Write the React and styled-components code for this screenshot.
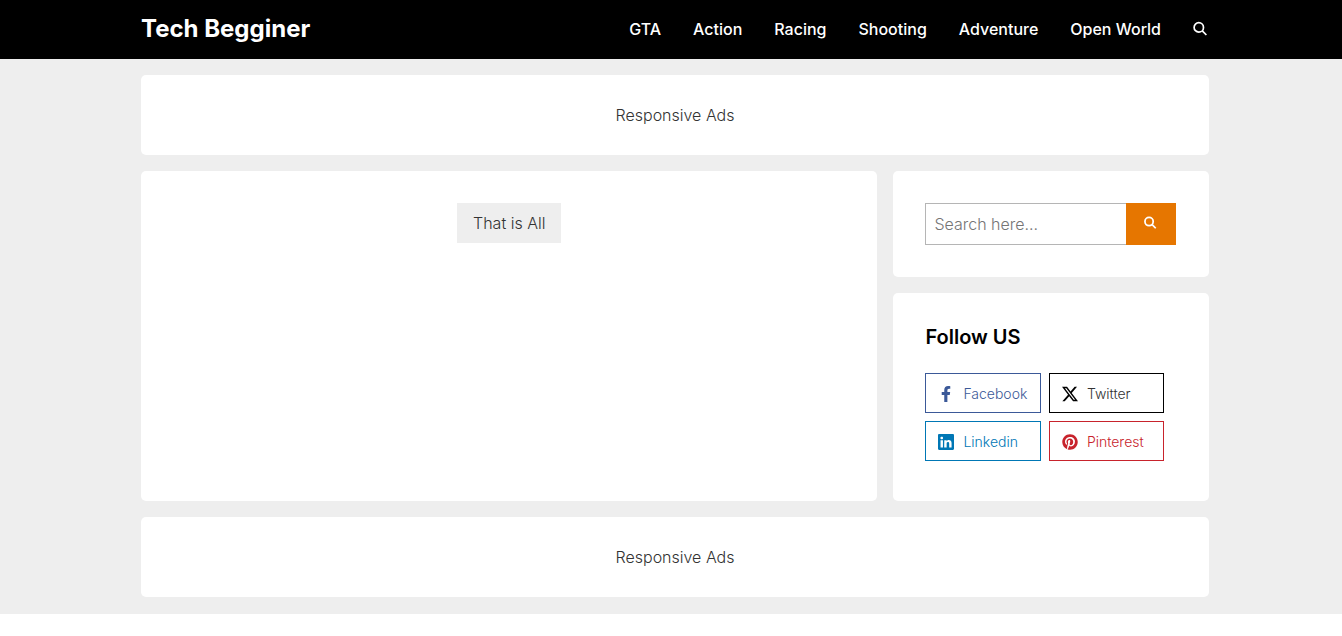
import React from "react";
import styled, { createGlobalStyle } from "styled-components";
import { FaFacebookF, FaPinterest } from "react-icons/fa";
import { BsLinkedin, BsTwitterX } from "react-icons/bs";

const GlobalStyle = createGlobalStyle`
  *, *::before, *::after { box-sizing: border-box; }
  body {
    margin: 0;
    background: #fff;
    color: #333;
    font: 350 16px/24px Inter, "Liberation Sans", sans-serif;
  }
  a { color: inherit; text-decoration: none; }
`;

const Header = styled.header`
  padding-left: 8px;
  background: #000;
  color: #fff;
`;

const Container = styled.div`
  max-width: 1100px;
  margin: 0 auto;
  padding: 0 16px;
`;

const HeaderBar = styled(Container)`
  display: flex;
  flex-wrap: wrap;
  align-items: center;
  justify-content: space-between;
  min-height: 59px;
  padding-bottom: 2px;
`;

const Brand = styled.a`
  font-size: 24px;
  line-height: 32px;
  font-weight: 700;
`;

const Nav = styled.nav`
  display: flex;
  flex-wrap: wrap;
  align-items: center;
  gap: 0 32px;
  font-weight: 500;
`;

const IconButton = styled.button`
  display: flex;
  padding: 0;
  border: 0;
  background: none;
  color: inherit;
  cursor: pointer;
`;

const Main = styled.main`
  padding: 16px 0 17px 8px;
  background: #eee;
`;

const Stack = styled(Container)`
  display: grid;
  gap: 16px;
`;

const Card = styled.section`
  padding: 32px;
  border-radius: 5px;
  background: #fff;
`;

const AdCard = styled(Card)`
  display: flex;
  align-items: center;
  justify-content: center;
  padding: 28px 32px;
`;

const Columns = styled.div`
  display: grid;
  grid-template-columns: minmax(0, 7fr) minmax(0, 3fr);
  gap: 16px;
  @media (max-width: 900px) {
    grid-template-columns: minmax(0, 1fr);
  }
`;

const PostsCard = styled(Card)`
  display: flex;
  align-items: flex-start;
  justify-content: center;
`;

const Notice = styled.p`
  margin: 0;
  padding: 8px 16px;
  background: #eee;
`;

const Sidebar = styled.aside`
  display: flex;
  flex-direction: column;
  gap: 16px;
`;

const SearchForm = styled.form`
  display: flex;
  height: 42px;
  padding-right: 1px;
`;

const SearchInput = styled.input`
  width: 80%;
  min-width: 0;
  padding: 0 8px;
  border: 1px solid #b5b5b5;
  border-right: 0;
  border-radius: 0;
  background: #fff;
  color: #333;
  font: inherit;
  font-weight: 300;
  outline: none;
  &::placeholder { color: #757575; opacity: 1; }
`;

const SearchSubmit = styled.button`
  display: flex;
  align-items: center;
  justify-content: center;
  width: 20%;
  padding: 0 0 2px;
  border: 0;
  background: #e67600;
  color: #fff;
  cursor: pointer;
`;

const CardTitle = styled.h2`
  margin: 0 0 24px;
  color: #000;
  font-size: 20px;
  line-height: 24px;
  font-weight: 600;
`;

const SocialGrid = styled.div`
  display: grid;
  grid-template-columns: 1fr 1fr;
  gap: 8px;
  width: 95%;
  margin-bottom: 8px;
`;

const SocialLink = styled.a`
  display: flex;
  align-items: center;
  gap: 9px;
  height: 40px;
  padding: 2px 12px 0;
  border: 1px solid ${(p) => p.$color};
  color: ${(p) => p.$text || p.$color};
  font-size: 14px;
  svg { flex: none; color: ${(p) => p.$color}; }
`;

function SearchIcon({ size, weight }) {
  return (
    <svg width={size} height={size} viewBox="0 0 16 16" fill="none" stroke="currentColor" strokeWidth={weight} aria-hidden="true">
      <circle cx="5.8" cy="6.4" r="4.7" />
      <path d="M9.3 9.9 13.4 14" />
    </svg>
  );
}

const categories = ["GTA", "Action", "Racing", "Shooting", "Adventure", "Open World"];

const socials = [
  { name: "Facebook", Icon: FaFacebookF, color: "#3b5998" },
  { name: "Twitter", Icon: BsTwitterX, color: "#000", text: "#333" },
  { name: "Linkedin", Icon: BsLinkedin, color: "#0077b5" },
  { name: "Pinterest", Icon: FaPinterest, color: "#c8232c" },
];

export default function App() {
  return (
    <>
      <GlobalStyle />
      <Header>
        <HeaderBar>
          <Brand href="#">Tech Begginer</Brand>
          <Nav>
            {categories.map((name) => (
              <a key={name} href="#">{name}</a>
            ))}
            <IconButton type="button" aria-label="Search">
              <SearchIcon size={16} weight={1.7} />
            </IconButton>
          </Nav>
        </HeaderBar>
      </Header>
      <Main>
        <Stack>
          <AdCard>Responsive Ads</AdCard>
          <Columns>
            <PostsCard>
              <Notice>That is All</Notice>
            </PostsCard>
            <Sidebar>
              <Card>
                <SearchForm role="search" onSubmit={(e) => e.preventDefault()}>
                  <SearchInput type="text" aria-label="Search" placeholder="Search here..." />
                  <SearchSubmit type="submit" aria-label="Submit search">
                    <SearchIcon size={14} weight={2} />
                  </SearchSubmit>
                </SearchForm>
              </Card>
              <Card>
                <CardTitle>Follow US</CardTitle>
                <SocialGrid>
                  {socials.map(({ name, Icon, color, text }) => (
                    <SocialLink key={name} href="#" $color={color} $text={text}>
                      <Icon size={16} aria-hidden="true" />
                      {name}
                    </SocialLink>
                  ))}
                </SocialGrid>
              </Card>
            </Sidebar>
          </Columns>
          <AdCard>Responsive Ads</AdCard>
        </Stack>
      </Main>
    </>
  );
}
